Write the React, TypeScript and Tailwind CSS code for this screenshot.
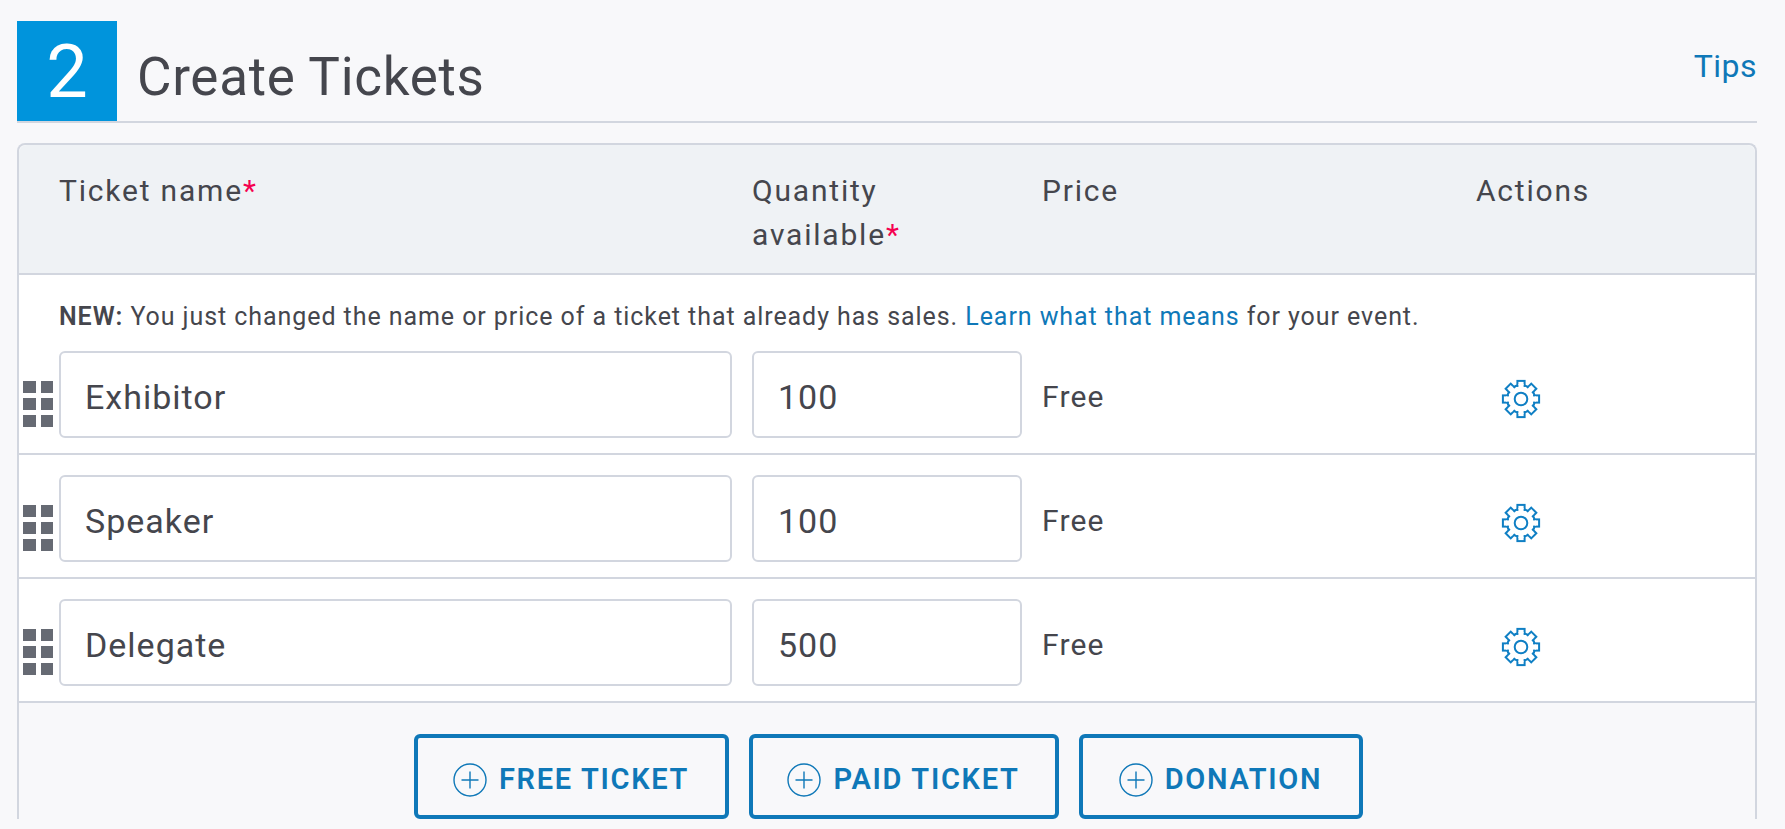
const FONT = "font-['Roboto','Liberation_Sans',sans-serif]"
const COLS = 'grid-cols-[673px_270px_414px_1fr]'

function GripIcon() {
  return (
    <svg width="30" height="46" viewBox="0 0 30 46" className="shrink-0" aria-hidden="true">
      {[0, 17, 34].map((y) =>
        [0, 18].map((x) => <rect key={`${x}-${y}`} x={x} y={y} width="13" height="12" fill="#666a73" />)
      )}
    </svg>
  )
}

function GearIcon() {
  const teeth = [0, 45, 90, 135, 180, 225, 270, 315]
  return (
    <svg width="40" height="40" viewBox="0 0 40 40" fill="none" stroke="#0f7fc4" strokeWidth="2" aria-hidden="true">
      <circle cx="20" cy="20" r="6.3" />
      <circle cx="20" cy="20" r="14" />
      {teeth.map((deg) => (
        <rect
          key={deg}
          x="16.4"
          y="1.9"
          width="7.2"
          height="5"
          fill="#fff"
          transform={`rotate(${deg} 20 20)`}
        />
      ))}
      {teeth.map((deg) => (
        <rect
          key={deg}
          x="17.4"
          y="5"
          width="5.2"
          height="3.8"
          fill="#fff"
          stroke="none"
          transform={`rotate(${deg} 20 20)`}
        />
      ))}
    </svg>
  )
}

function PlusCircle() {
  return (
    <svg width="34" height="34" viewBox="0 0 34 34" fill="none" stroke="#0f78b8" strokeWidth="1.4" className="shrink-0" aria-hidden="true">
      <circle cx="17" cy="17" r="16" />
      <path d="M17 8.5v17M8.5 17h17" />
    </svg>
  )
}

function TicketRow({ name, qty }: { name: string; qty: string }) {
  return (
    <div className={`relative grid h-[124px] ${COLS} items-start gap-x-5 border-b-2 border-[#d2d6df] bg-white pl-10 pt-5`}>
      <div className="absolute left-1 top-[50px]">
        <GripIcon />
      </div>
      <div className="flex h-[87px] items-center rounded-md border-2 border-[#d2d6df] bg-white pl-6 pt-1.5 text-[34px] tracking-[1px] text-[#45464d]">
        {name}
      </div>
      <div className="flex h-[87px] items-center rounded-md border-2 border-[#d2d6df] bg-white pl-6 pt-1.5 text-[34px] tracking-[1px] text-[#45464d]">
        {qty}
      </div>
      <div className="flex h-[87px] items-center pt-1 text-[30px] tracking-[1.2px] text-[#45464d]">Free</div>
      <div className="flex h-[87px] items-center pl-[25px] pt-2">
        <GearIcon />
      </div>
    </div>
  )
}

function AddButton({ label, width }: { label: string; width: string }) {
  return (
    <button
      type="button"
      className={`flex h-[85px] items-center justify-center gap-3 rounded-md border-[4px] border-[#0f78b8] pt-1.5 text-[29px] font-semibold tracking-[1.7px] text-[#0f78b8] ${width}`}
    >
      <PlusCircle />
      {label}
    </button>
  )
}

export default function App() {
  return (
    <div className={`min-h-screen overflow-hidden bg-[#f8f8fa] pl-[17px] pr-7 pt-[21px] ${FONT}`}>
      <div className="flex h-[102px] items-start border-b-2 border-[#d2d6df]">
        <div className="flex h-[100px] w-[100px] items-center justify-center bg-[#0094dc] text-[74px] font-normal text-white">
          2
        </div>
        <h1 className="ml-5 mt-[26px] text-[53px] font-normal leading-[60px] tracking-[0.7px] text-[#45464d]">
          Create Tickets
        </h1>
        <a href="#" className="ml-auto mt-[27px] text-[32px] leading-9 tracking-[0.5px] text-[#0f78b8]">
          Tips
        </a>
      </div>

      <div className="mt-5 rounded-t-lg border-x-2 border-t-2 border-[#d2d6df]">
        <div className={`grid h-[130px] ${COLS} gap-x-5 rounded-t-lg border-b-2 border-[#d2d6df] bg-[#eff2f5] pl-10 pt-6 text-[30px] leading-[44px] tracking-[1.8px] text-[#45464d]`}>
          <div>
            Ticket name<span className="text-[#f5004f]">*</span>
          </div>
          <div>
            Quantity
            <br />
            available<span className="text-[#f5004f]">*</span>
          </div>
          <div>Price</div>
          <div>Actions</div>
        </div>

        <div className="-mb-px h-[57px] bg-white pl-10 pt-[26px] text-[25px] leading-8 tracking-[0.93px] text-[#45464d]">
          <strong className="font-semibold">NEW:</strong> You just changed the name or price of a ticket that already has sales.{' '}
          <a href="#" className="text-[#0f78b8]">
            Learn what that means
          </a>{' '}
          for your event.
        </div>
        <TicketRow name="Exhibitor" qty="100" />
        <TicketRow name="Speaker" qty="100" />
        <TicketRow name="Delegate" qty="500" />

        <div className="flex justify-center gap-5 pl-0.5 pt-[31px]">
          <AddButton label="FREE TICKET" width="w-[315px]" />
          <AddButton label="PAID TICKET" width="w-[310px]" />
          <AddButton label="DONATION" width="w-[284px]" />
        </div>
      </div>
    </div>
  )
}
